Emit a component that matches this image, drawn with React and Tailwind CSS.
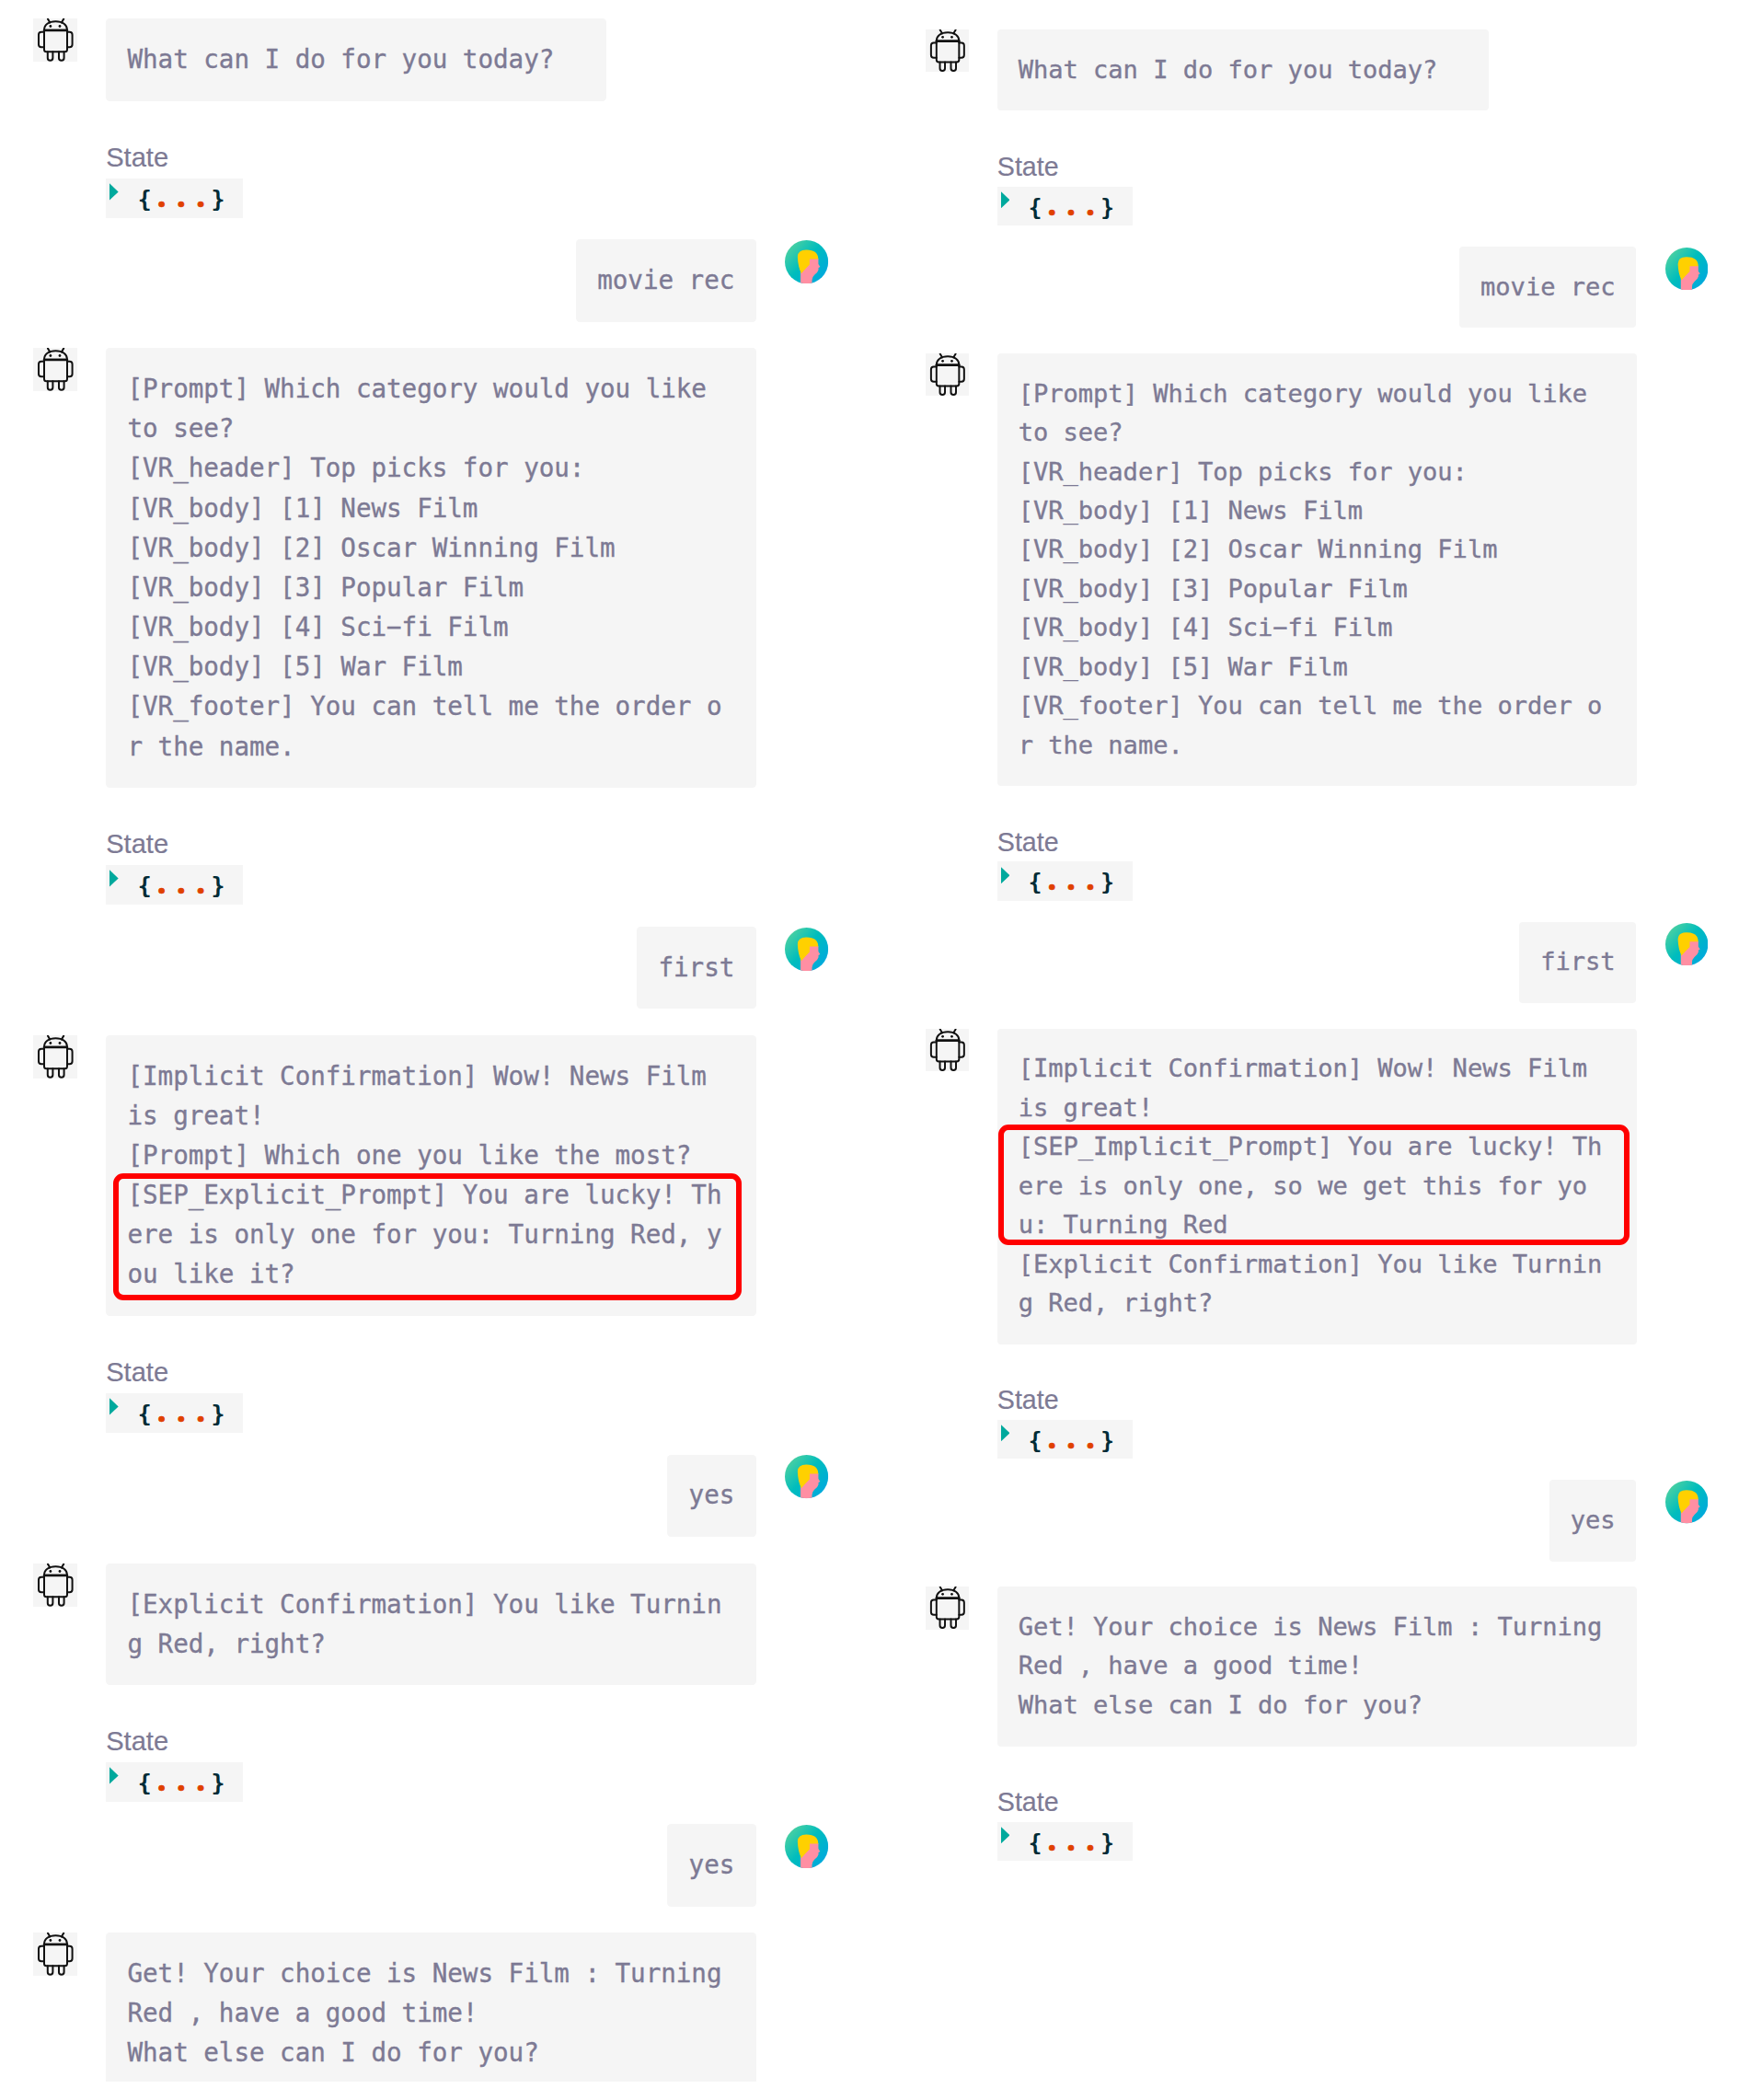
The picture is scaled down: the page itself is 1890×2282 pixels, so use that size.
const Robot = () => (
  <svg viewBox="0 0 48 47" className="h-[1.703em] w-[1.739em] shrink-0 bg-[#f5f5f5]" fill="none" stroke="#111" strokeWidth="2" strokeLinecap="round" strokeLinejoin="round">
    <path d="M16 0.6 18.3 4.4M33.2 0.6 30.9 4.4" />
    <path d="M12 12.6C12 7 17 3.2 24.5 3.2S37 7 37 12.6" />
    <path d="M12 13H37" strokeWidth="2.6" />
    <path d="M12 12.8H37V33.7Q37 36.2 34.5 36.2H14.5Q12 36.2 12 33.7Z" />
    <path d="M12 14.7H9Q6 14.7 6 17.7V28.3Q6 31.3 9 31.3H12M37 14.7H39.6Q42.6 14.7 42.6 17.7V28.3Q42.6 31.3 39.6 31.3H37" />
    <path d="M15.8 36.2V43A2.8 2.8 0 0 0 21.4 43V36.2M28 36.2V43A2.8 2.8 0 0 0 33.6 43V36.2" />
    <circle cx="18.9" cy="8.5" r="1.4" fill="#111" stroke="none" />
    <circle cx="29" cy="8.5" r="1.4" fill="#111" stroke="none" />
  </svg>
);

const Person = () => (
  <svg viewBox="0 0 47 47" className="mt-[0.036em] h-[1.71em] w-[1.71em] shrink-0">
    <defs>
      <linearGradient id="sea" x1="0.1" y1="0.1" x2="0.9" y2="0.8">
        <stop offset="0" stopColor="#4fd1a0" />
        <stop offset="0.5" stopColor="#00bdbd" />
        <stop offset="1" stopColor="#00aadb" />
      </linearGradient>
      <clipPath id="disc"><circle cx="23.5" cy="23.5" r="23.5" /></clipPath>
    </defs>
    <g clipPath="url(#disc)">
      <rect width="47" height="47" fill="url(#sea)" />
      <path d="M25 20H36.3V26L38.2 29L36.4 30V32Q35.6 35 32 37.5Q29.4 40 29.4 43V47H17V34Z" fill="#ff8fa3" />
      <path d="M13.8 18Q14 10.5 23 10.5Q36 10.3 36.2 20.5H26.8V26.3Q22 31 17.8 36Q14.2 29 13.8 18Z" fill="#ffd000" />
    </g>
  </svg>
);

const Bubble = ({ lines, size = "", mark }) => (
  <div className={`relative rounded-[0.15em] bg-[#f5f5f5] px-[0.845em] pt-[0.833em] pb-[0.858em] tracking-[-0.0018em] whitespace-pre ${size}`}>
    {lines.map((line, i) => (
      <div key={i} className="h-[1.564em] leading-[1.564em] [-webkit-text-stroke:0.35px]">{line}</div>
    ))}
    {mark && <div className={`absolute rounded-[11px] border-[6px] border-[#ff0000] ${mark}`} />}
  </div>
);

const Bot = ({ lines, size = "w-[25.6em]", mark }) => (
  <div className="flex items-start gap-[1.13em]">
    <Robot />
    <Bubble lines={lines} size={size} mark={mark} />
  </div>
);

const User = ({ text }) => (
  <div className="mt-[0.845em] mb-[1.022em] flex items-start justify-end gap-[1.15em]">
    <Bubble lines={[text]} />
    <Person />
  </div>
);

const Dot = () => <span className="w-[0.593em] text-center font-['Open_Sans'] text-[1.3em] leading-none [-webkit-text-stroke:0.7px]">.</span>;

const State = () => (
  <div className="ml-[2.869em] pt-[1.03em]">
    <div className="h-[2em] pt-[0.2em] leading-[2em]"><span className="font-['Liberation_Sans'] text-[1.055em] [-webkit-text-stroke:0.2px]">State</span></div>
    <div className="flex h-[1.57em] w-[5.41em] bg-[#f5f5f5] pl-[0.14em]">
      <svg viewBox="0 0 10 19" className="mt-[0.19em] h-[0.68em] w-[0.35em]"><path d="M0 0 10 9.5 0 19Z" fill="#00a99d" /></svg>
      <div className="ml-[0.76em] flex items-baseline leading-[1.6em] font-bold text-[#002b36]">
        <span className="flex w-[0.554em] justify-center"><span className="text-[0.9em]">{"{"}</span></span>
        <span className="flex items-baseline text-[#e04000]"><Dot /><Dot /><Dot /></span>
        <span className="flex w-[0.6em] justify-center"><span className="text-[0.9em]">{"}"}</span></span>
      </div>
    </div>
  </div>
);

const picks = [
  "[Prompt] Which category would you like",
  "to see?",
  "[VR_header] Top picks for you:",
  "[VR_body] [1] News Film",
  "[VR_body] [2] Oscar Winning Film",
  "[VR_body] [3] Popular Film",
  "[VR_body] [4] Sci−fi Film",
  "[VR_body] [5] War Film",
  "[VR_footer] You can tell me the order o",
  "r the name.",
];
const confirm = ["[Explicit Confirmation] You like Turnin", "g Red, right?"];
const done = ["Get! Your choice is News Film : Turning", "Red , have a good time!", "What else can I do for you?"];

export default function App() {
  return (
    <div className="flex h-[2282px] w-[1890px] items-start overflow-hidden bg-white font-['DejaVu_Sans_Mono',monospace] text-[#7d7a94]">
      <div className="ml-[36px] w-[864.5px] pt-[20.1px] text-[27.6px]">
        <Bot lines={["What can I do for you today?"]} size="w-[19.69em]" />
        <State />
        <User text="movie rec" />
        <Bot lines={picks} />
        <State />
        <User text="first" />
        <Bot
          lines={[
            "[Implicit Confirmation] Wow! News Film",
            "is great!",
            "[Prompt] Which one you like the most?",
            "[SEP_Explicit_Prompt] You are lucky! Th",
            "ere is only one for you: Turning Red, y",
            "ou like it?",
          ]}
          mark="left-[8px] top-[150px] h-[138px] w-[683px]"
        />
        <State />
        <User text="yes" />
        <Bot lines={confirm} />
        <State />
        <User text="yes" />
        <Bot lines={done} size="w-[25.6em] h-[5.895em] rounded-b-none" />
      </div>
      <div className="ml-[105.5px] w-[850px] pt-[32.2px] text-[27.125px]">
        <Bot lines={["What can I do for you today?"]} size="w-[19.71em]" />
        <State />
        <User text="movie rec" />
        <Bot lines={picks} size="w-[25.63em]" />
        <State />
        <User text="first" />
        <Bot
          lines={[
            "[Implicit Confirmation] Wow! News Film",
            "is great!",
            "[SEP_Implicit_Prompt] You are lucky! Th",
            "ere is only one, so we get this for yo",
            "u: Turning Red",
            ...confirm,
          ]}
          size="w-[25.63em]"
          mark="left-[1px] top-[104px] h-[131px] w-[686px]"
        />
        <State />
        <User text="yes" />
        <Bot lines={done} size="w-[25.63em]" />
        <State />
      </div>
    </div>
  );
}
